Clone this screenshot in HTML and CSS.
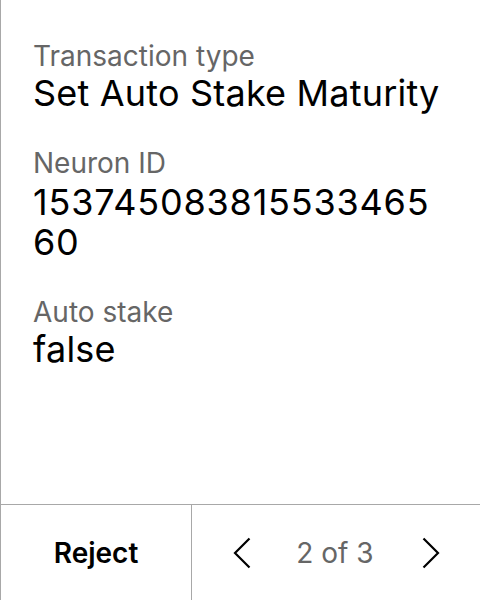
FILE: index.html
```html
<!DOCTYPE html>
<html>
<head>
<meta charset="utf-8">
<link rel="stylesheet" href="styles.css">
</head>
<body>
<div class="screen">
  <div class="content">
    <div class="field">
      <div class="label">Transaction type</div>
      <div class="value">Set Auto Stake Maturity</div>
    </div>
    <div class="field">
      <div class="label">Neuron ID</div>
      <div class="value num">15374508381553346560</div>
    </div>
    <div class="field">
      <div class="label">Auto stake</div>
      <div class="value">false</div>
    </div>
  </div>
  <div class="footer">
    <div class="reject">Reject</div>
    <div class="pager">
      <svg class="chev" width="18" height="32" viewBox="0 0 18 32"><polyline points="16.5,1.5 2,16 16.5,30.5" fill="none" stroke="#000" stroke-width="2.2"/></svg>
      <span class="count">2 of 3</span>
      <svg class="chev" width="18" height="32" viewBox="0 0 18 32"><polyline points="1.5,1.5 16,16 1.5,30.5" fill="none" stroke="#000" stroke-width="2.2"/></svg>
    </div>
  </div>
</div>
</body>
</html>
```

FILE: styles.css
```css
* { box-sizing: border-box; }
html, body { margin: 0; padding: 0; background: #fff; }
body { font-family: Inter, "Noto Sans", sans-serif; color: #000; }
.screen {
  width: 480px;
  height: 600px;
  border-left: 1px solid #a8a8a8;
  display: flex;
  flex-direction: column;
}
.content {
  flex: 1;
  padding: 38px 32px 0 32px;
  display: flex;
  flex-direction: column;
  gap: 32px;
}
.label {
  font-size: 28px;
  line-height: 36px;
  color: #666;
}
.value {
  font-size: 36px;
  line-height: 40px;
  margin-top: -1px;
  letter-spacing: 0.2px;
  word-break: break-all;
}
.num {
  letter-spacing: 0.8px;
  margin-top: 1px;
}
.footer {
  height: 96px;
  border-top: 1px solid #a8a8a8;
  display: flex;
}
.reject {
  width: 191px;
  border-right: 1px solid #a8a8a8;
  display: flex;
  align-items: center;
  justify-content: center;
  font-size: 28px;
  font-weight: 600;
}
.pager {
  flex: 1;
  display: flex;
  align-items: center;
  justify-content: space-between;
  padding: 0 40px 0 41px;
}
.count {
  font-size: 28px;
  color: #666;
  margin-left: -3px;
}
.chev { display: block; }
```
